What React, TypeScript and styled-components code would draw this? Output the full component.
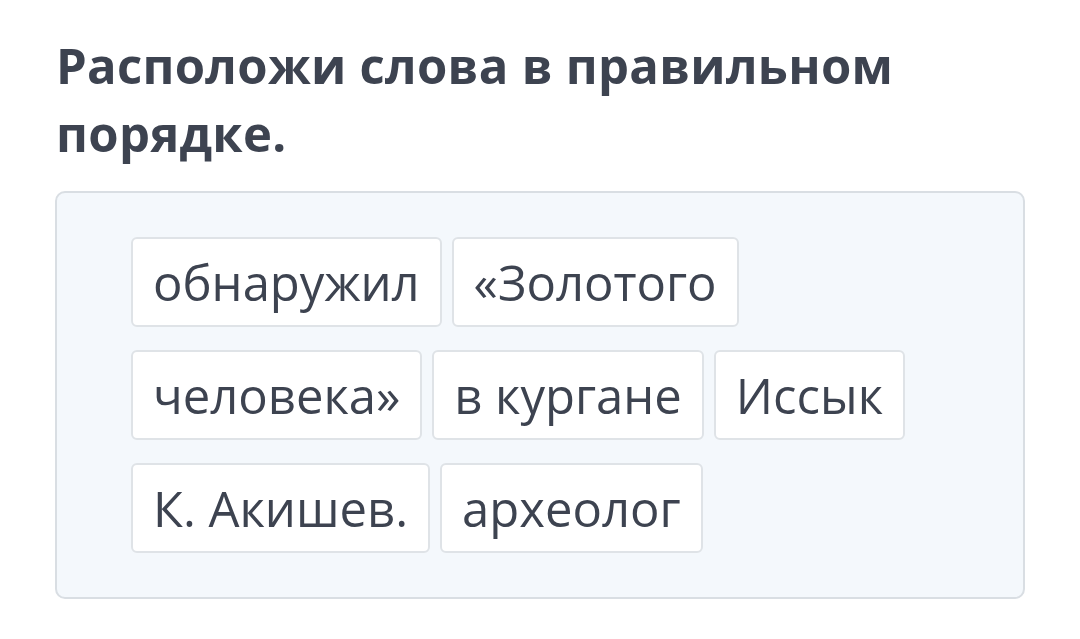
import styled, { createGlobalStyle } from "styled-components";

const GlobalStyle = createGlobalStyle`
  html, body {
    margin: 0;
    padding: 0;
    background: #ffffff;
  }

  body {
    font-family: "Open Sans", "Noto Sans", sans-serif;
    color: #3d4350;
  }
`;

const Page = styled.main`
  width: 1080px;
  height: 639px;
  box-sizing: border-box;
  padding: 31px 55px 0;
  display: flex;
  flex-direction: column;
  gap: 24px;
`;

const Title = styled.h1`
  margin: 0 0 0 1px;
  font-size: 49px;
  line-height: 68px;
  font-weight: 700;
  color: #3d4350;
  letter-spacing: 0.3px;
`;

const Board = styled.section`
  box-sizing: border-box;
  width: 970px;
  padding: 44px 74px 44px;
  background: #f4f8fc;
  border: 2px solid #d9dee3;
  border-radius: 10px;
  display: flex;
  flex-wrap: wrap;
  align-content: flex-start;
  gap: 23px 10px;
`;

const Word = styled.button`
  box-sizing: border-box;
  height: 90px;
  padding: 0 20px;
  background: #ffffff;
  border: 2px solid #dfe3e7;
  border-radius: 6px;
  font-family: "Open Sans", "Noto Sans", sans-serif;
  font-size: 49px;
  color: #3d4350;
  cursor: grab;
`;

const words = [
  "обнаружил",
  "«Золотого",
  "человека»",
  "в кургане",
  "Иссык",
  "К. Акишев.",
  "археолог",
];

const App = () => (
  <>
    <GlobalStyle />
    <Page>
      <Title>
        Расположи слова в правильном
        <br />
        порядке.
      </Title>
      <Board>
        {words.map((word) => (
          <Word key={word} type="button">
            {word}
          </Word>
        ))}
      </Board>
    </Page>
  </>
);

export default App;
